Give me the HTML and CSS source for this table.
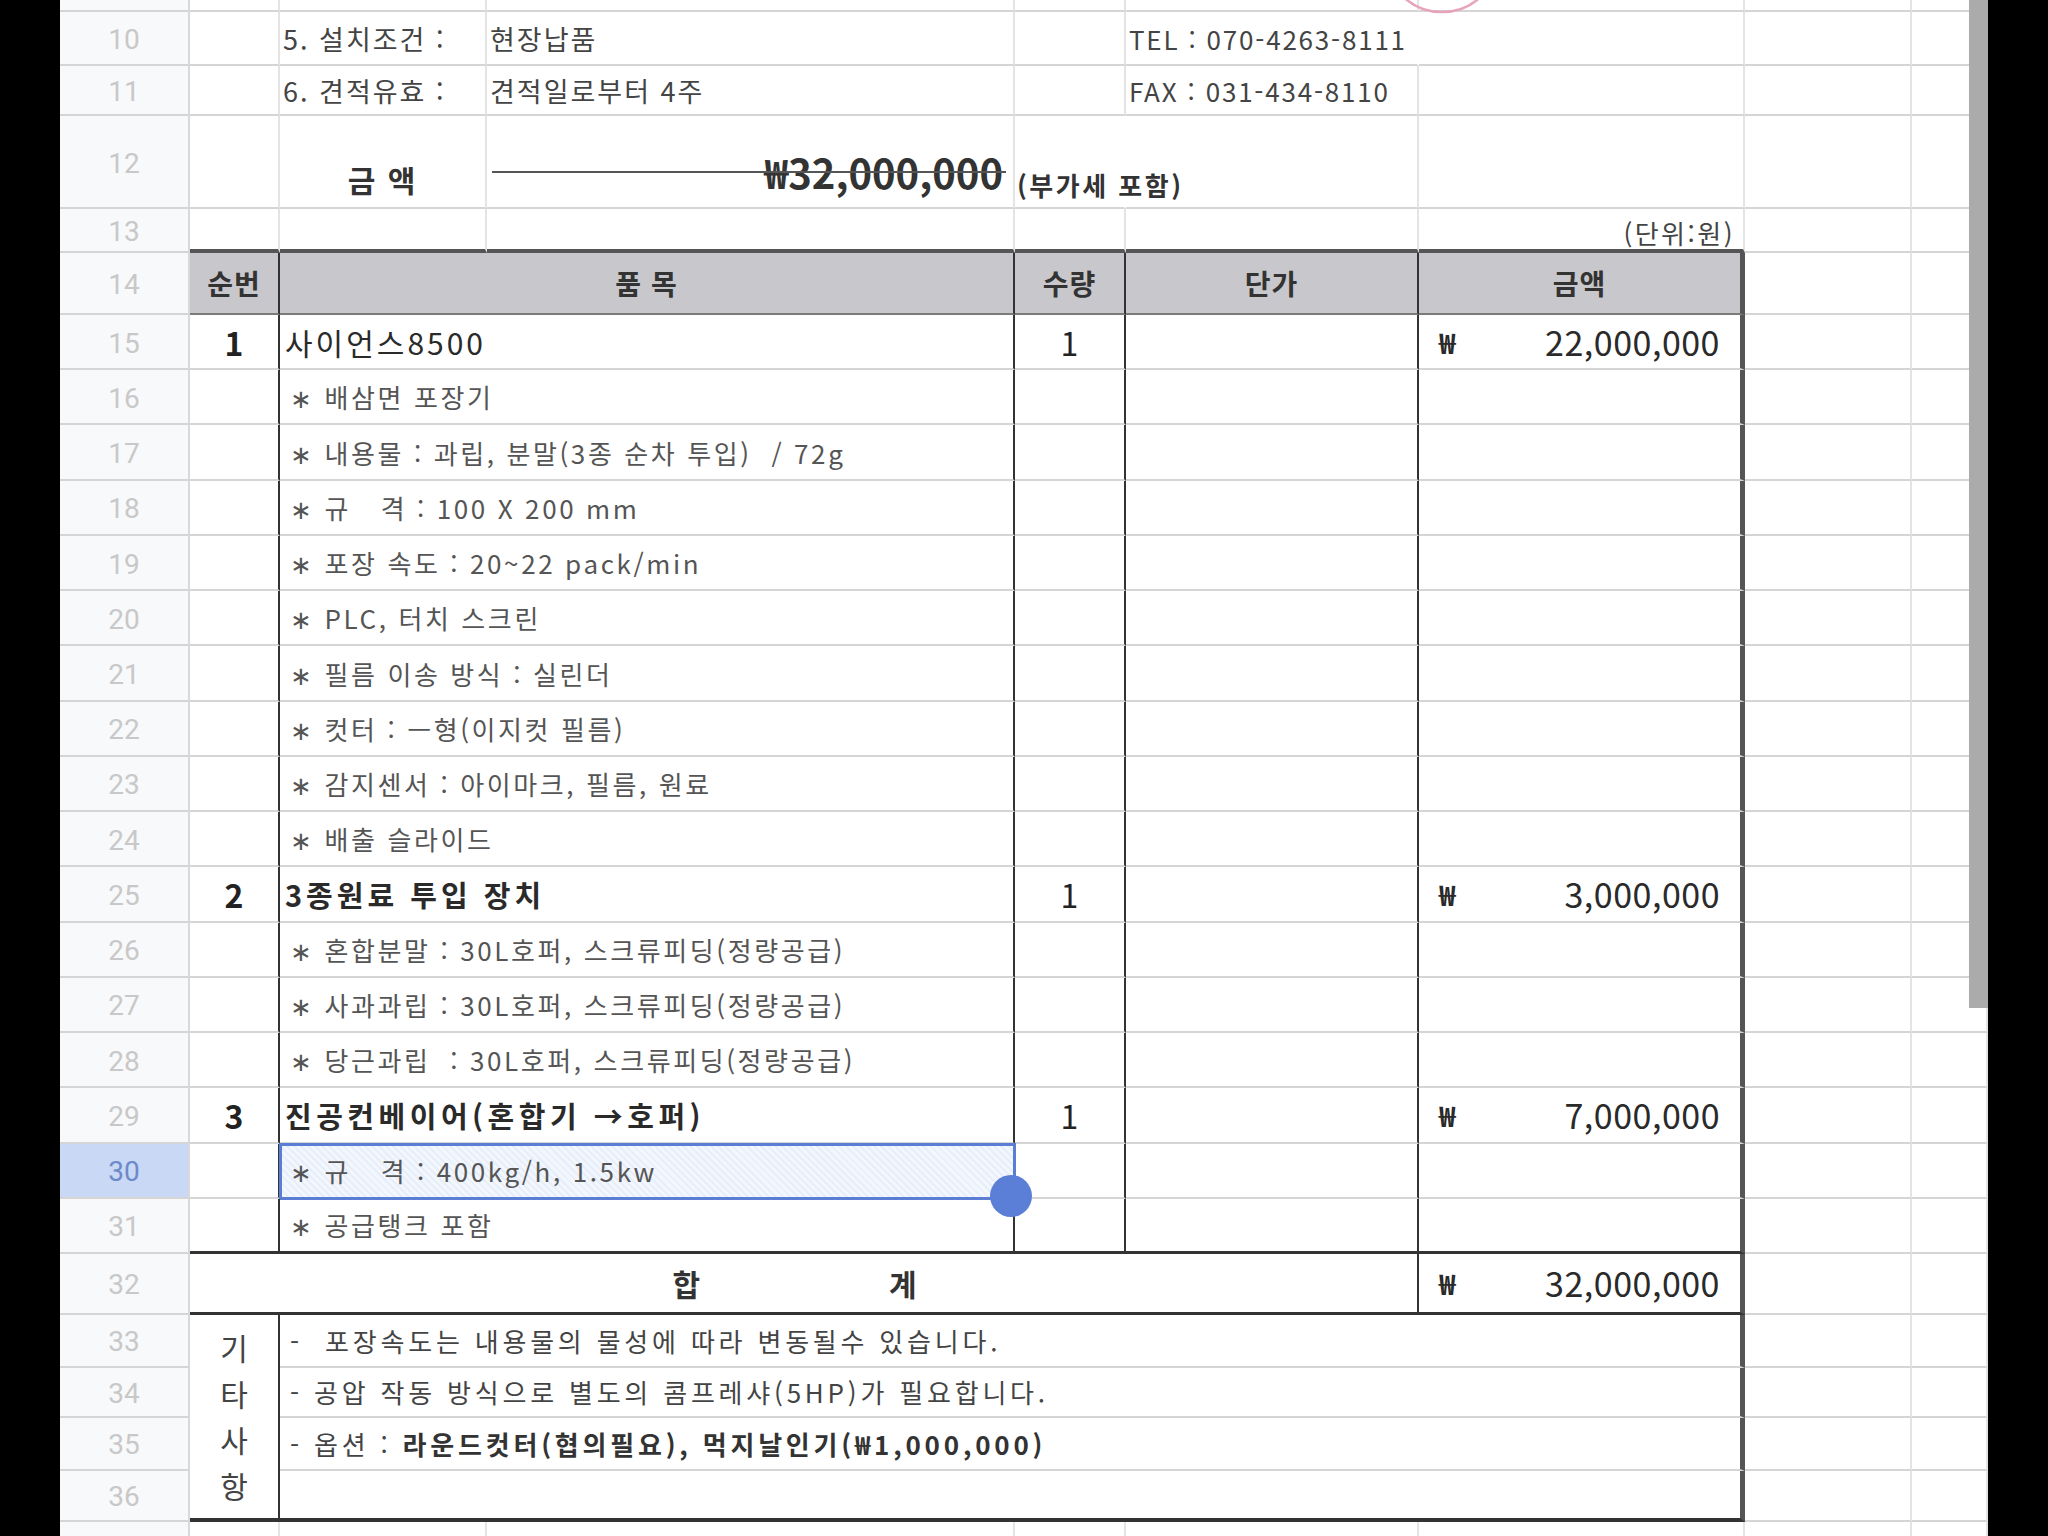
FILE: index.html
```html
<!DOCTYPE html>
<html lang="ko">
<head>
<meta charset="utf-8">
<title>견적서</title>
<link rel="stylesheet" href="styles.css">
</head>
<body>
<div class="screen">
  <div class="sheet">
    <div class="grid">
      <!-- row 9 (partial) -->
      <div class="c rh"></div><div class="c"></div><div class="c"></div><div class="c"></div><div class="c"></div><div class="c"></div><div class="c"></div><div class="c"></div><div class="c"></div>

      <!-- row 10 -->
      <div class="c rh">10</div><div class="c"></div>
      <div class="c info">5. 설치조건 :</div>
      <div class="c info">현장납품</div>
      <div class="c"></div>
      <div class="c info tel nr">TEL : 070-4263-8111</div>
      <div class="c"></div><div class="c"></div><div class="c"></div>

      <!-- row 11 -->
      <div class="c rh">11</div><div class="c"></div>
      <div class="c info">6. 견적유효 :</div>
      <div class="c info">견적일로부터 4주</div>
      <div class="c"></div>
      <div class="c info tel">FAX : 031-434-8110</div>
      <div class="c"></div><div class="c"></div><div class="c"></div>

      <!-- row 12 -->
      <div class="c rh">12</div><div class="c"></div>
      <div class="c total-label">금 액</div>
      <div class="c total-amt"><span>₩32,000,000</span></div>
      <div class="c nr vat">(부가세 포함)</div>
      <div class="c"></div><div class="c"></div><div class="c"></div><div class="c"></div>

      <!-- row 13 -->
      <div class="c rh">13</div>
      <div class="c bBT"></div><div class="c bBT"></div><div class="c bBT"></div><div class="c bBT"></div><div class="c bBT"></div>
      <div class="c bBT unit">(단위:원)</div>
      <div class="c"></div><div class="c"></div>

      <!-- row 14 header -->
      <div class="c rh">14</div>
      <div class="c hdr bR">순번</div>
      <div class="c hdr bR s2">품 목</div>
      <div class="c hdr bR">수량</div>
      <div class="c hdr bR">단가</div>
      <div class="c hdr bRT">금액</div>
      <div class="c"></div><div class="c"></div>

      <!-- row 15 -->
      <div class="c rh">15</div>
      <div class="c bR no">1</div>
      <div class="c bR s2 item">사이언스8500</div>
      <div class="c bR qty">1</div>
      <div class="c bR"></div>
      <div class="c bRT amt"><span class="won">₩</span><span class="num">22,000,000</span></div>
      <div class="c"></div><div class="c"></div>

      <!-- row 16 -->
      <div class="c rh">16</div><div class="c bR"></div>
      <div class="c bR s2 sub">∗ 배삼면 포장기</div>
      <div class="c bR"></div><div class="c bR"></div><div class="c bRT"></div><div class="c"></div><div class="c"></div>

      <!-- row 17 -->
      <div class="c rh">17</div><div class="c bR"></div>
      <div class="c bR s2 sub">∗ 내용물 : 과립, 분말(3종 순차 투입)&nbsp; / 72g</div>
      <div class="c bR"></div><div class="c bR"></div><div class="c bRT"></div><div class="c"></div><div class="c"></div>

      <!-- row 18 -->
      <div class="c rh">18</div><div class="c bR"></div>
      <div class="c bR s2 sub">∗ 규&nbsp;&nbsp; 격 : 100 X 200 mm</div>
      <div class="c bR"></div><div class="c bR"></div><div class="c bRT"></div><div class="c"></div><div class="c"></div>

      <!-- row 19 -->
      <div class="c rh">19</div><div class="c bR"></div>
      <div class="c bR s2 sub">∗ 포장 속도 : 20~22 pack/min</div>
      <div class="c bR"></div><div class="c bR"></div><div class="c bRT"></div><div class="c"></div><div class="c"></div>

      <!-- row 20 -->
      <div class="c rh">20</div><div class="c bR"></div>
      <div class="c bR s2 sub">∗ PLC, 터치 스크린</div>
      <div class="c bR"></div><div class="c bR"></div><div class="c bRT"></div><div class="c"></div><div class="c"></div>

      <!-- row 21 -->
      <div class="c rh">21</div><div class="c bR"></div>
      <div class="c bR s2 sub">∗ 필름 이송 방식 : 실린더</div>
      <div class="c bR"></div><div class="c bR"></div><div class="c bRT"></div><div class="c"></div><div class="c"></div>

      <!-- row 22 -->
      <div class="c rh">22</div><div class="c bR"></div>
      <div class="c bR s2 sub">∗ 컷터 : ㅡ형(이지컷 필름)</div>
      <div class="c bR"></div><div class="c bR"></div><div class="c bRT"></div><div class="c"></div><div class="c"></div>

      <!-- row 23 -->
      <div class="c rh">23</div><div class="c bR"></div>
      <div class="c bR s2 sub">∗ 감지센서 : 아이마크, 필름, 원료</div>
      <div class="c bR"></div><div class="c bR"></div><div class="c bRT"></div><div class="c"></div><div class="c"></div>

      <!-- row 24 -->
      <div class="c rh">24</div><div class="c bR"></div>
      <div class="c bR s2 sub">∗ 배출 슬라이드</div>
      <div class="c bR"></div><div class="c bR"></div><div class="c bRT"></div><div class="c"></div><div class="c"></div>

      <!-- row 25 -->
      <div class="c rh">25</div>
      <div class="c bR no">2</div>
      <div class="c bR s2 item bold">3종원료 투입 장치</div>
      <div class="c bR qty">1</div>
      <div class="c bR"></div>
      <div class="c bRT amt"><span class="won">₩</span><span class="num">3,000,000</span></div>
      <div class="c"></div><div class="c"></div>

      <!-- row 26 -->
      <div class="c rh">26</div><div class="c bR"></div>
      <div class="c bR s2 sub">∗ 혼합분말 : 30L호퍼, 스크류피딩(정량공급)</div>
      <div class="c bR"></div><div class="c bR"></div><div class="c bRT"></div><div class="c"></div><div class="c"></div>

      <!-- row 27 -->
      <div class="c rh">27</div><div class="c bR"></div>
      <div class="c bR s2 sub">∗ 사과과립 : 30L호퍼, 스크류피딩(정량공급)</div>
      <div class="c bR"></div><div class="c bR"></div><div class="c bRT"></div><div class="c"></div><div class="c"></div>

      <!-- row 28 -->
      <div class="c rh">28</div><div class="c bR"></div>
      <div class="c bR s2 sub">∗ 당근과립&nbsp; : 30L호퍼, 스크류피딩(정량공급)</div>
      <div class="c bR"></div><div class="c bR"></div><div class="c bRT"></div><div class="c"></div><div class="c"></div>

      <!-- row 29 -->
      <div class="c rh">29</div>
      <div class="c bR no">3</div>
      <div class="c bR s2 item bold wide">진공컨베이어(혼합기 →호퍼)</div>
      <div class="c bR qty">1</div>
      <div class="c bR"></div>
      <div class="c bRT amt"><span class="won">₩</span><span class="num">7,000,000</span></div>
      <div class="c"></div><div class="c"></div>

      <!-- row 30 (selected) -->
      <div class="c rh rh-sel">30</div><div class="c bR"></div>
      <div class="c bR s2 sub selected">∗ 규&nbsp;&nbsp; 격 : 400kg/h, 1.5kw</div>
      <div class="c bR"></div><div class="c bR"></div><div class="c bRT"></div><div class="c"></div><div class="c"></div>

      <!-- row 31 -->
      <div class="c rh">31</div><div class="c bR bB3"></div>
      <div class="c bR bB3 s2 sub">∗ 공급탱크 포함</div>
      <div class="c bR bB3"></div><div class="c bR bB3"></div><div class="c bRT bB3"></div><div class="c"></div><div class="c"></div>

      <!-- row 32 -->
      <div class="c rh">32</div>
      <div class="c bR bB3 s5 sum-label"><span>합</span><span>계</span></div>
      <div class="c bRT bB3 amt"><span class="won">₩</span><span class="num">32,000,000</span></div>
      <div class="c"></div><div class="c"></div>

      <!-- row 33 -->
      <div class="c rh">33</div>
      <div class="c bR bBB etc">기<br>타<br>사<br>항</div>
      <div class="c bRT s5 note">-&nbsp; 포장속도는 내용물의 물성에 따라 변동될수 있습니다.</div>
      <div class="c"></div><div class="c"></div>

      <!-- row 34 -->
      <div class="c rh">34</div>
      <div class="c bRT s5 note">- 공압 작동 방식으로 별도의 콤프레샤(5HP)가 필요합니다.</div>
      <div class="c"></div><div class="c"></div>

      <!-- row 35 -->
      <div class="c rh">35</div>
      <div class="c bRT s5 note">- 옵션 :&nbsp;<b>라운드컷터(협의필요), 먹지날인기(₩1,000,000)</b></div>
      <div class="c"></div><div class="c"></div>

      <!-- row 36 -->
      <div class="c rh">36</div>
      <div class="c bRT bBB s5 note"></div>
      <div class="c"></div><div class="c"></div>

      <!-- row 37 (partial) -->
      <div class="c rh nb"></div><div class="c nb"></div><div class="c nb"></div><div class="c nb"></div><div class="c nb"></div><div class="c nb"></div><div class="c nb"></div><div class="c nb"></div><div class="c nb"></div>
    </div>

    <svg class="stamp" width="130" height="20" viewBox="0 0 130 20" aria-hidden="true">
      <ellipse cx="62" cy="-30" rx="50" ry="42" fill="none" stroke="#e7a3bb" stroke-width="2.5"/>
    </svg>
    <div class="scroll-thumb"></div>
  </div>
</div>
</body>
</html>
```

FILE: styles.css
```css
html, body {
  margin: 0;
  padding: 0;
  background: #000;
}

.screen {
  width: 2048px;
  height: 1536px;
  display: flex;
  overflow: hidden;
}

.sheet {
  position: relative;
  margin-left: 60px;
  width: 1928px;
  height: 1536px;
  background: #fff;
  overflow: hidden;
}

.grid {
  display: grid;
  grid-template-columns: 130px 90px 207px 528px 111px 293px 326px 167px 76px;
  grid-template-rows: 12px 54px 50px 93px 44px 62px repeat(17, 55.235px) 61px 53px 50px 53px 51px 14px;
  font-family: "Noto Sans CJK KR", "Noto Sans", sans-serif;
  color: #333;
}

.c {
  box-sizing: border-box;
  border-right: 2px solid #e4e4e4;
  border-bottom: 2px solid #d5d5d5;
  display: flex;
  align-items: center;
  white-space: nowrap;
  min-width: 0;
  position: relative;
}

.nr { border-right-color: transparent; }
.nb { border-bottom: none; }

.s2 { grid-column: span 2; }
.s5 { grid-column: span 5; }

/* row header */
.rh {
  background: #f8f9fa;
  justify-content: center;
  padding-top: 3px;
  color: #c8c8c8;
  font-family: Roboto, "Noto Sans", sans-serif;
  font-size: 28px;
  border-right: 2px solid #d9d9d9;
}
.rh-sel {
  background: #c9d8f5;
  color: #6d89c9;
}

/* table borders */
.bR { border-right: 2px solid #333; }
.bRT { border-right: 5px solid #555; }
.bB3 { border-bottom: 3px solid #333; }
.bBT { border-bottom: 4px solid #555; }
.bBB { border-bottom: 4px solid #333; }

/* info rows */
.info {
  padding-left: 3px;
  font-size: 27px;
  letter-spacing: 2px;
  color: #444;
}
.info.tel {
  font-size: 26px;
  letter-spacing: 1.8px;
}

.total-label {
  justify-content: center;
  padding-top: 35px;
  font-size: 30px;
  font-weight: 700;
  letter-spacing: 2px;
  color: #333;
}

.total-amt {
  justify-content: flex-end;
  padding-top: 20px;
  padding-right: 10px;
  font-size: 40px;
  font-weight: 700;
  color: #333;
}
.total-amt::before {
  content: "";
  position: absolute;
  left: 5px;
  right: 7px;
  top: 55px;
  height: 2px;
  background: #555;
  z-index: 1;
}

.vat {
  padding-left: 2px;
  padding-top: 45px;
  font-size: 26px;
  font-weight: 700;
  letter-spacing: 2.5px;
  color: #333;
}

.unit {
  justify-content: flex-end;
  padding-right: 8px;
  padding-top: 6px;
  font-size: 26px;
  color: #444;
  letter-spacing: 2.5px;
}

/* header */
.hdr {
  background: #c8c7cb;
  justify-content: center;
  font-size: 28px;
  font-weight: 700;
  letter-spacing: 1px;
  color: #333;
  border-bottom: 2px solid #7a7a7a;
}

/* item rows */
.no {
  justify-content: center;
  font-size: 32px;
  font-weight: 700;
  color: #222;
}
.qty {
  justify-content: center;
  font-size: 32px;
  color: #222;
}
.item {
  padding-left: 5px;
  font-size: 30px;
  letter-spacing: 3px;
  color: #2a2a2a;
}
.item.bold { font-weight: 700; letter-spacing: 4px; font-size: 29px; }
.item.wide { letter-spacing: 4.5px; }

.sub {
  padding-left: 10px;
  font-size: 26px;
  letter-spacing: 2.6px;
  color: #555;
}

.amt {
  justify-content: space-between;
  padding: 0 20px 0 20px;
  color: #2a2a2a;
}
.won {
  font-size: 28px;
  font-weight: 700;
}
.num {
  font-size: 34px;
  letter-spacing: 0.5px;
}

/* selection */
.selected {
  outline: 3px solid #5b7ed4;
  outline-offset: -2px;
  background:
    repeating-linear-gradient(45deg, rgba(91, 126, 212, 0.07) 0 2px, transparent 2px 5px),
    rgba(232, 239, 252, 0.55);
}
.selected::after {
  content: "";
  position: absolute;
  right: -19px;
  bottom: -20px;
  width: 42px;
  height: 42px;
  border-radius: 50%;
  background: #5b7ed6;
  z-index: 5;
}

/* total */
.sum-label {
  justify-content: center;
  gap: 189px;
  padding-right: 18px;
  font-size: 30px;
  font-weight: 700;
  color: #333;
}

.etc {
  grid-row: span 4;
  flex-direction: column;
  justify-content: center;
  display: flex;
  text-align: center;
  font-size: 30px;
  line-height: 46px;
  color: #444;
}

.note {
  padding-left: 10px;
  font-size: 26px;
  letter-spacing: 3.8px;
  color: #444;
}
.note b {
  font-weight: 700;
  color: #333;
}

/* overlays */
.stamp {
  position: absolute;
  left: 1320px;
  top: 0;
}

.scroll-thumb {
  position: absolute;
  right: 0;
  top: 0;
  width: 19px;
  height: 1008px;
  background: #ababab;
}
```
